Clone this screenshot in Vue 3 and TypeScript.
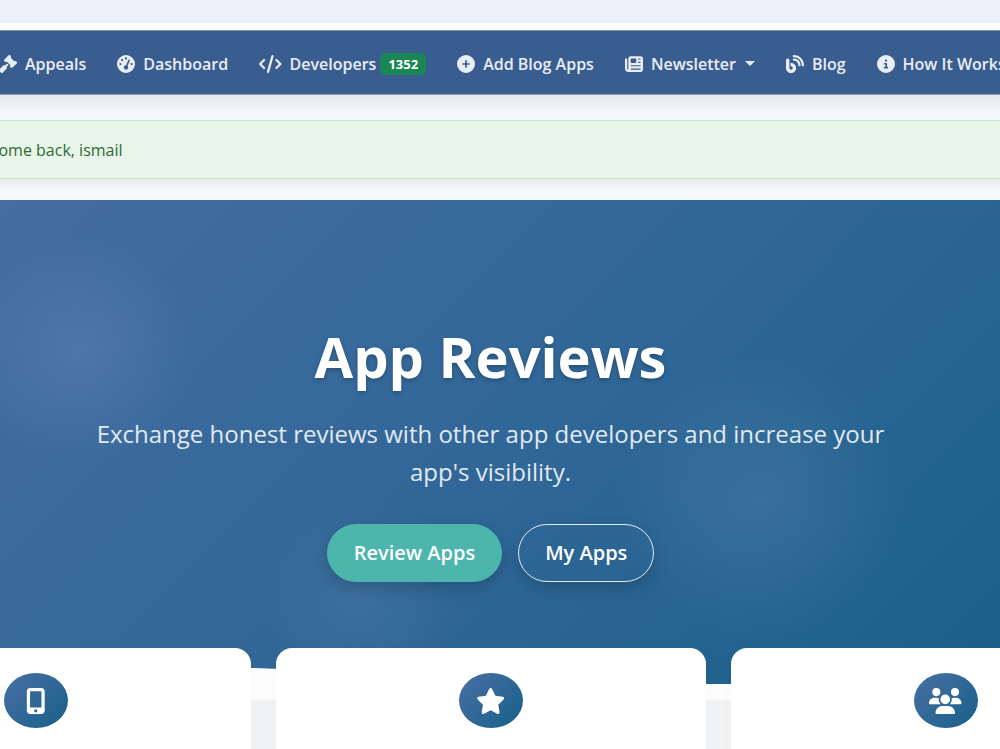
<script setup lang="ts">
interface Icon {
  width: number
  path: string
}

interface NavItem {
  label: string
  icon: Icon
  badge?: string
  menu?: boolean
}

const gavel: Icon = {
  width: 512,
  path: 'M318.6 9.4c-12.5-12.5-32.8-12.5-45.3 0l-120 120c-12.5 12.5-12.5 32.8 0 45.3l16 16c12.5 12.5 32.8 12.5 45.3 0l4-4L325.4 293.4l-4 4c-12.5 12.5-12.5 32.8 0 45.3l16 16c12.5 12.5 32.8 12.5 45.3 0l120-120c12.5-12.5 12.5-32.8 0-45.3l-16-16c-12.5-12.5-32.8-12.5-45.3 0l-4 4L330.6 74.6l4-4c12.5-12.5 12.5-32.8 0-45.3l-16-16zm-152 288c-12.5-12.5-32.8-12.5-45.3 0l-112 112c-12.5 12.5-12.5 32.8 0 45.3l48 48c12.5 12.5 32.8 12.5 45.3 0l112-112c12.5-12.5 12.5-32.8 0-45.3l-1.4-1.4L272 285.3 226.7 240 168 298.7l-1.4-1.4z',
}
const gauge: Icon = {
  width: 512,
  path: 'M0 256a256 256 0 1 1 512 0A256 256 0 1 1 0 256zM288 96a32 32 0 1 0 -64 0 32 32 0 1 0 64 0zM256 416c35.3 0 64-28.7 64-64c0-17.4-6.9-33.1-18.1-44.6L366 161.7c5.3-12.1-.2-26.3-12.3-31.6s-26.3 .2-31.6 12.3L257.9 288c-.6 0-1.3 0-1.9 0c-35.3 0-64 28.7-64 64s28.7 64 64 64zM176 144a32 32 0 1 0 -64 0 32 32 0 1 0 64 0zM96 288a32 32 0 1 0 0-64 32 32 0 1 0 0 64zm352-32a32 32 0 1 0 -64 0 32 32 0 1 0 64 0z',
}
const code: Icon = {
  width: 640,
  path: 'M392.8 1.2c-17-4.9-34.7 5-39.6 22l-128 448c-4.9 17 5 34.7 22 39.6s34.7-5 39.6-22l128-448c4.9-17-5-34.7-22-39.6zm80.6 120.1c-12.5 12.5-12.5 32.8 0 45.3L562.7 256l-89.4 89.4c-12.5 12.5-12.5 32.8 0 45.3s32.8 12.5 45.3 0l112-112c12.5-12.5 12.5-32.8 0-45.3l-112-112c-12.5-12.5-32.8-12.5-45.3 0zm-306.7 0c-12.5-12.5-32.8-12.5-45.3 0l-112 112c-12.5 12.5-12.5 32.8 0 45.3l112 112c12.5 12.5 32.8 12.5 45.3 0s12.5-32.8 0-45.3L77.3 256l89.4-89.4c12.5-12.5 12.5-32.8 0-45.3z',
}
const plus: Icon = {
  width: 512,
  path: 'M256 512A256 256 0 1 0 256 0a256 256 0 1 0 0 512zM232 344V280H168c-13.3 0-24-10.7-24-24s10.7-24 24-24h64V168c0-13.3 10.7-24 24-24s24 10.7 24 24v64h64c13.3 0 24 10.7 24 24s-10.7 24-24 24H280v64c0 13.3-10.7 24-24 24s-24-10.7-24-24z',
}
const newspaper: Icon = {
  width: 512,
  path: 'M96 96c0-35.3 28.7-64 64-64H448c35.3 0 64 28.7 64 64V416c0 35.3-28.7 64-64 64H80c-44.2 0-80-35.8-80-80V128c0-17.7 14.3-32 32-32s32 14.3 32 32V400c0 8.8 7.2 16 16 16s16-7.2 16-16V96zm64 24v80c0 13.3 10.7 24 24 24H296c13.3 0 24-10.7 24-24V120c0-13.3-10.7-24-24-24H184c-13.3 0-24 10.7-24 24zm208-8c0 8.8 7.2 16 16 16h48c8.8 0 16-7.2 16-16s-7.2-16-16-16H384c-8.8 0-16 7.2-16 16zm0 96c0 8.8 7.2 16 16 16h48c8.8 0 16-7.2 16-16s-7.2-16-16-16H384c-8.8 0-16 7.2-16 16zM160 304c0 8.8 7.2 16 16 16H432c8.8 0 16-7.2 16-16s-7.2-16-16-16H176c-8.8 0-16 7.2-16 16zm0 96c0 8.8 7.2 16 16 16H432c8.8 0 16-7.2 16-16s-7.2-16-16-16H176c-8.8 0-16 7.2-16 16z',
}
const blog: Icon = {
  width: 512,
  path: 'M192 32c0 17.7 14.3 32 32 32c123.7 0 224 100.3 224 224c0 17.7 14.3 32 32 32s32-14.3 32-32C512 128.9 383.1 0 224 0c-17.7 0-32 14.3-32 32zm0 96c0 17.7 14.3 32 32 32c70.7 0 128 57.3 128 128c0 17.7 14.3 32 32 32s32-14.3 32-32c0-106-86-192-192-192c-17.7 0-32 14.3-32 32zM96 144c0-26.5-21.5-48-48-48S0 117.5 0 144V368c0 79.5 64.5 144 144 144s144-64.5 144-144s-64.5-144-144-144H128v96h16c26.5 0 48 21.5 48 48s-21.5 48-48 48s-48-21.5-48-48V144z',
}
const info: Icon = {
  width: 512,
  path: 'M256 512A256 256 0 1 0 256 0a256 256 0 1 0 0 512zM216 336h24V272H216c-13.3 0-24-10.7-24-24s10.7-24 24-24h48c13.3 0 24 10.7 24 24v88h8c13.3 0 24 10.7 24 24s-10.7 24-24 24H216c-13.3 0-24-10.7-24-24s10.7-24 24-24zm40-208a32 32 0 1 1 0 64 32 32 0 1 1 0-64z',
}
const mobile: Icon = {
  width: 384,
  path: 'M16 64C16 28.7 44.7 0 80 0H304c35.3 0 64 28.7 64 64V448c0 35.3-28.7 64-64 64H80c-35.3 0-64-28.7-64-64V64zM224 448a32 32 0 1 0 -64 0 32 32 0 1 0 64 0zM304 64H80V384H304V64z',
}
const star: Icon = {
  width: 576,
  path: 'M316.9 18C311.6 7 300.4 0 288.1 0s-23.4 7-28.8 18L195 150.3 51.4 171.5c-12 1.8-22 10.2-25.7 21.7s-.7 24.2 7.9 32.7L137.8 329 113.2 474.7c-2 12 3 24.2 12.9 31.3s23 8 33.8 2.3l128.3-68.5 128.3 68.5c10.8 5.7 23.9 4.9 33.8-2.3s14.9-19.3 12.9-31.3L438.5 329 542.7 225.9c8.6-8.5 11.7-21.2 7.9-32.7s-13.7-19.9-25.7-21.7L381.2 150.3 316.9 18z',
}
const users: Icon = {
  width: 640,
  path: 'M144 0a80 80 0 1 1 0 160A80 80 0 1 1 144 0zM512 0a80 80 0 1 1 0 160A80 80 0 1 1 512 0zM0 298.7C0 239.8 47.8 192 106.7 192h42.7c15.9 0 31 3.5 44.6 9.7c-1.3 7.2-1.9 14.7-1.9 22.3c0 38.2 16.8 72.5 43.3 96c-.2 0-.4 0-.7 0H21.3C9.6 320 0 310.4 0 298.7zM405.3 320c-.2 0-.4 0-.7 0c26.6-23.5 43.3-57.8 43.3-96c0-7.6-.7-15-1.9-22.3c13.6-6.3 28.7-9.7 44.6-9.7h42.7C592.2 192 640 239.8 640 298.7c0 11.8-9.6 21.3-21.3 21.3H405.3zM224 224a96 96 0 1 1 192 0 96 96 0 1 1 -192 0zM128 485.3C128 411.7 187.7 352 261.3 352H378.7C452.3 352 512 411.7 512 485.3c0 14.7-11.9 26.7-26.7 26.7H154.7c-14.7 0-26.7-11.9-26.7-26.7z',
}

const navItems: NavItem[] = [
  { label: 'Appeals', icon: gavel },
  { label: 'Dashboard', icon: gauge },
  { label: 'Developers', icon: code, badge: '1352' },
  { label: 'Add Blog Apps', icon: plus },
  { label: 'Newsletter', icon: newspaper, menu: true },
  { label: 'Blog', icon: blog },
  { label: 'How It Works', icon: info },
]

const features: Icon[] = [mobile, star, users]
</script>

<template>
  <div class="page">
    <div class="top-strip"></div>
    <nav class="navbar">
      <ul class="nav-list">
        <li v-for="item in navItems" :key="item.label">
          <component
            :is="item.menu ? 'button' : 'a'"
            class="nav-link"
            :href="item.menu ? undefined : '#'"
            :type="item.menu ? 'button' : undefined"
          >
            <svg class="nav-icon" :viewBox="`0 0 ${item.icon.width} 512`" aria-hidden="true">
              <path :d="item.icon.path" />
            </svg>
            <span>{{ item.label }}</span>
            <span v-if="item.badge" class="badge">{{ item.badge }}</span>
            <span v-if="item.menu" class="caret"></span>
          </component>
        </li>
      </ul>
    </nav>

    <div class="alert" role="alert">Welcome back, ismail</div>

    <main>
      <section class="hero">
        <div class="hero-content">
          <h1>App Reviews</h1>
          <p>Exchange honest reviews with other app developers and increase your app's visibility.</p>
          <div class="actions">
            <a class="btn btn-primary" href="#">Review Apps</a>
            <a class="btn btn-outline" href="#">My Apps</a>
          </div>
        </div>
        <svg class="wave" viewBox="0 0 1000 40" preserveAspectRatio="none" aria-hidden="true">
          <path d="M0 4C150 4 230 7 280 9C450 16 600 24 720 24C830 24 920 20 1000 16V40H0Z" />
        </svg>
      </section>

      <section class="features">
        <article v-for="(feature, i) in features" :key="i" class="card">
          <div class="card-icon">
            <svg :viewBox="`0 0 ${feature.width} 512`" aria-hidden="true">
              <path :d="feature.path" />
            </svg>
          </div>
        </article>
      </section>
    </main>
  </div>
</template>

<style>
body {
  margin: 0;
}
</style>

<style scoped>
.page {
  height: 100vh;
  overflow: hidden;
  background: #f8f9fb;
  font-family: "Open Sans", "Noto Sans", sans-serif;
  font-size: 16px;
}

.top-strip {
  position: relative;
  z-index: 1;
  height: 23px;
  background: #ecf0fa;
  border-bottom: 7px solid #fefefe;
}

.navbar {
  display: flex;
  align-items: center;
  height: 63px;
  margin: 0 -24px;
  padding: 0 24px;
  background: #3a5d8f;
  border-top: 1px solid #8694a8;
  border-bottom: 1px solid #8b9fc4;
  box-shadow: 0 4px 20px rgba(0, 0, 0, 0.12);
}

.nav-list {
  display: flex;
  gap: 31px;
  margin: 2px 0 0 -1px;
  padding: 0;
  list-style: none;
}

.nav-link {
  display: flex;
  align-items: center;
  padding: 0;
  border: 0;
  background: none;
  color: #e9edf4;
  font: 600 16px/24px "Open Sans", "Noto Sans", sans-serif;
  text-decoration: none;
  white-space: nowrap;
}

.nav-icon {
  height: 18px;
  margin-right: 8px;
  fill: currentColor;
}

.badge {
  margin-left: 4px;
  padding: 0 8px;
  border-radius: 6px;
  background: #198754;
  color: #fff;
  font-size: 13px;
  font-weight: 700;
  line-height: 22px;
}

.caret {
  margin-left: 9px;
  border-top: 5px solid currentColor;
  border-right: 5px solid transparent;
  border-left: 5px solid transparent;
}

.alert {
  margin: 25px -50px 21px;
  padding: 17px 12px 15px;
  border: 1px solid #c8e6c9;
  background: #e8f5e9;
  color: #2e6b34;
  line-height: 25px;
  box-shadow: 0 4px 12px rgba(0, 0, 0, 0.08);
}

main {
  background: #f3f4f6;
}

.hero {
  position: relative;
  padding: 123px 19px 118px 0;
  background:
    radial-gradient(circle at 8% 30%, rgba(255, 255, 255, 0.08) 0, transparent 115px),
    radial-gradient(circle at 76% 60%, rgba(255, 255, 255, 0.08) 0, transparent 145px),
    radial-gradient(circle at 36% 80%, rgba(255, 255, 255, 0.06) 0, transparent 95px),
    linear-gradient(135deg, #456da2 0%, #2d6696 58%, #1a6089 100%);
  color: #fff;
  text-align: center;
}

.hero-content {
  max-width: 820px;
  margin: 0 auto;
}

h1 {
  margin: 0 0 26px;
  font-size: 56px;
  font-weight: 700;
  line-height: 66px;
  text-shadow: 0 2px 4px rgba(0, 0, 0, 0.25);
}

p {
  margin: 0 0 33px;
  color: #e1e9f1;
  font-size: 24px;
  line-height: 38px;
}

.actions {
  display: flex;
  justify-content: center;
  gap: 16px;
}

.btn {
  padding: 0 26px;
  border: 1px solid #4db6ac;
  border-radius: 30px;
  color: #fff;
  font-size: 20px;
  font-weight: 600;
  line-height: 56px;
  text-decoration: none;
  box-shadow: 0 6px 16px rgba(0, 0, 0, 0.18);
}

.btn-primary {
  background: #4db6ac;
}

.btn-outline {
  border-color: #e3eaf2;
}

.wave {
  position: absolute;
  bottom: 0;
  left: 0;
  width: 100%;
  height: 40px;
  fill: #fefefe;
}

.features {
  position: relative;
  display: grid;
  grid-template-columns: repeat(3, 43vw);
  justify-content: center;
  gap: 25px;
  margin-top: -52px;
  padding-right: 19px;
}

.card {
  box-sizing: border-box;
  min-height: 260px;
  padding-top: 25px;
  border-radius: 16px;
  background: #fff;
  box-shadow: 0 8px 24px rgba(0, 0, 0, 0.03);
}

.card-icon {
  display: flex;
  align-items: center;
  justify-content: center;
  width: 64px;
  height: 55px;
  margin: 0 auto;
  border-radius: 50%;
  background: linear-gradient(135deg, #4a6fa5, #166088);
}

.card-icon svg {
  height: 26px;
  fill: #fff;
}
</style>
